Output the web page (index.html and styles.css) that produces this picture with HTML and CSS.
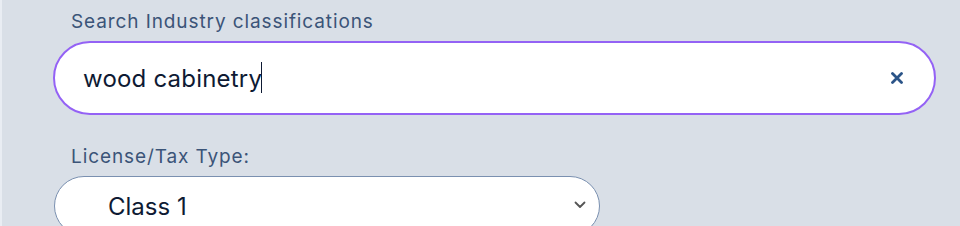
FILE: index.html
```html
<!DOCTYPE html>
<html lang="en">

<head>
    <meta charset="UTF-8">
    <meta name="viewport" content="width=device-width, initial-scale=1.0">
    <title>Industry classification search</title>
    <link rel="stylesheet" href="styles.css">
</head>

<body>
    <div class="page">
        <!-- Search field -->
        <div class="field">
            <label class="field-label" for="industrySearch">Search Industry classifications</label>
            <div class="search-box">
                <input type="text" id="industrySearch" class="search-input" value="wood cabinetry">
                <span class="caret"></span>
                <button class="clear-btn" aria-label="Clear">
                    <svg width="12" height="12" viewBox="0 0 12 12">
                        <path d="M1.5 1.5 L10.5 10.5 M10.5 1.5 L1.5 10.5" stroke="#2b5488" stroke-width="2.8"
                            stroke-linecap="round" fill="none" />
                    </svg>
                </button>
            </div>
        </div>

        <!-- License type -->
        <div class="field field-select">
            <label class="field-label" for="licenseType">License/Tax Type:</label>
            <div class="select-box">
                <select id="licenseType" class="select-input">
                    <option>Class 1</option>
                    <option>Class 2</option>
                    <option>Class 3</option>
                </select>
                <svg class="chevron" width="12" height="8" viewBox="0 0 12 8">
                    <path d="M1.5 1.5 L6 6 L10.5 1.5" stroke="#555" stroke-width="1.8" fill="none"
                        stroke-linecap="round" stroke-linejoin="round" />
                </svg>
            </div>
        </div>
    </div>
</body>

</html>
```

FILE: styles.css
```css
/* Page base */
body {
    margin: 0;
    padding: 0;
    background-color: #d9dfe7;
    font-family: 'Inter', 'Open Sans', sans-serif;
    color: #0e1a33;
}

.page {
    border-left: 2px solid #e9edf3;
    min-height: 226px;
    padding: 9px 0 0 51px;
}

/* Field wrapper */
.field {
    display: flex;
    flex-direction: column;
    gap: 7px;
    width: 883px;
}

.field-select {
    margin-top: 29px;
    width: 546px;
    padding-left: 1px;
}

.field-label {
    padding-left: 18px;
    font-size: 19px;
    line-height: 25px;
    letter-spacing: 0.9px;
    color: #3b5478;
}

.field-select .field-label {
    padding-left: 17px;
}

/* Search input */
.search-box {
    position: relative;
    display: flex;
    align-items: center;
    height: 70px;
    border: 2px solid #9462f5;
    border-radius: 37px;
    background-color: white;
    padding: 0 31px 0 28px;
}

.search-input {
    flex: 1;
    border: none;
    outline: none;
    background: transparent;
    padding: 0;
    font-family: inherit;
    font-size: 24px;
    letter-spacing: 0.2px;
    color: #0e1a33;
}

.caret {
    position: absolute;
    left: 206px;
    top: 19px;
    width: 1px;
    height: 31px;
    background-color: #0e1a33;
}

.clear-btn {
    border: none;
    background: none;
    padding: 0;
    width: 12px;
    height: 12px;
    display: flex;
    cursor: pointer;
}

/* Select */
.select-box {
    position: relative;
}

.select-input {
    appearance: none;
    width: 100%;
    height: 60px;
    border: 1px solid #7a90b0;
    border-radius: 30px;
    background-color: white;
    padding: 0 40px 0 53px;
    font-family: inherit;
    font-size: 24px;
    color: #0e1a33;
}

.chevron {
    position: absolute;
    right: 14px;
    top: 25px;
    pointer-events: none;
}
```
